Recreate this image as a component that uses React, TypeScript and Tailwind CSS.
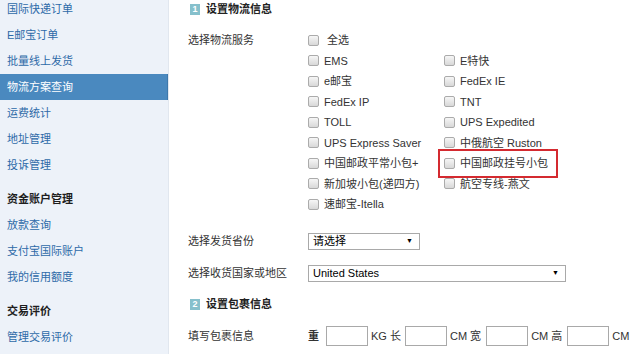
import React from "react";

const font = { fontFamily: '"Liberation Sans", "Noto Sans CJK SC", sans-serif' };

const menuTop = ["国际快递订单", "E邮宝订单", "批量线上发货", "物流方案查询", "运费统计", "地址管理", "投诉管理"];
const menuFund = ["放款查询", "支付宝国际账户", "我的信用额度"];

const leftCol = ["全选", "EMS", "e邮宝", "FedEx IP", "TOLL", "UPS Express Saver", "中国邮政平常小包+", "新加坡小包(递四方)", "速邮宝-Itella"];
const rightCol = ["", "E特快", "FedEx IE", "TNT", "UPS Expedited", "中俄航空 Ruston", "中国邮政挂号小包", "航空专线-燕文", ""];

const Checkbox = () => (
  <span className="w-[11px] h-[11px] shrink-0 rounded-[2px] border border-[#ababab] bg-linear-to-b from-[#f6f6f6] to-[#d8d8d8]" />
);

const SidebarItem = ({ label, active }: { label: string; active?: boolean }) => (
  <div
    className={
      "h-[26px] flex items-center pl-[7px] text-[11px] " +
      (active ? "bg-[#4a89bf] text-white border-r border-[#3d78ab]" : "text-[#2d6aa8]")
    }
  >
    {label}
  </div>
);

const SectionTitle = ({ num, title }: { num: string; title: string }) => (
  <div className="h-[19px] flex items-center pl-[2px] gap-[6px]">
    <span className="w-[10px] h-[11px] bg-[#86c0cc] text-white text-[9px] font-bold leading-[11px] flex items-center justify-center">
      {num}
    </span>
    <span className="text-[11px] font-bold text-[#222]">{title}</span>
  </div>
);

const Box = () => <span className="block w-[42px] h-[20px] border border-[#a9a9a9] bg-white" />;

export default function App() {
  return (
    <div className="w-[640px] h-[354px] overflow-hidden flex bg-white" style={font}>
      {/* 左侧菜单 */}
      <div className="w-[169px] shrink-0 bg-[#edf2f9] border-r border-[#e1e7ef]">
        <div className="mt-[-4px]">
          {menuTop.map((m, i) => (
            <SidebarItem key={m} label={m} active={i === 3} />
          ))}
          <div className="mt-2 h-[26px] flex items-center pl-[7px] text-[11px] font-bold text-[#1e1e1e]">资金账户管理</div>
          {menuFund.map((m) => (
            <SidebarItem key={m} label={m} />
          ))}
          <div className="mt-2 h-[26px] flex items-center pl-[7px] text-[11px] font-bold text-[#1e1e1e]">交易评价</div>
          <SidebarItem label="管理交易评价" />
        </div>
      </div>

      {/* 主内容 */}
      <div className="flex-1 pl-[19px] text-[11px] text-[#333]">
        <SectionTitle num="1" title="设置物流信息" />

        <div className="mt-[11px] flex">
          <div className="w-[120px] h-[20.5px] flex items-center">选择物流服务</div>
          <div className="grid grid-cols-[136px_auto]">
            {leftCol.map((l, i) => (
              <React.Fragment key={l}>
                <div className="h-[20.5px] flex items-center gap-[5px]">
                  <Checkbox />
                  <span className={i === 0 ? "ml-[3px]" : ""}>{l}</span>
                </div>
                <div className="h-[20.5px] flex items-center">
                  {rightCol[i] && (
                    <div className="relative flex items-center gap-[5px]">
                      <Checkbox />
                      <span>{rightCol[i]}</span>
                      {i === 6 && (
                        <span className="absolute left-[-6px] right-[-10px] top-[-6px] bottom-[-6px] border-2 border-[#d42a30]" />
                      )}
                    </div>
                  )}
                </div>
              </React.Fragment>
            ))}
          </div>
        </div>

        <div className="mt-[16.5px] h-[20px] flex items-center">
          <div className="w-[120px]">选择发货省份</div>
          <div className="w-[112px] h-[17px] border border-[#a9a9a9] bg-white flex items-center justify-between pl-[4px] pr-[6px] text-black">
            <span>请选择</span>
            <span className="text-[7px]">▼</span>
          </div>
        </div>

        <div className="mt-[12px] h-[20px] flex items-center">
          <div className="w-[120px]">选择收货国家或地区</div>
          <div className="w-[258px] h-[17px] border border-[#a9a9a9] bg-white flex items-center justify-between pl-[4px] pr-[6px] text-black">
            <span>United States</span>
            <span className="text-[7px]">▼</span>
          </div>
        </div>

        <div className="mt-[11.5px]">
          <SectionTitle num="2" title="设置包裹信息" />
        </div>

        <div className="mt-[12.5px] h-[20px] flex items-center">
          <div className="w-[120px]">填写包裹信息</div>
          <div className="flex items-center">
            <span className="font-bold">重</span>
            <span className="ml-[7px]"><Box /></span>
            <span className="ml-[3px]">KG 长</span>
            <span className="ml-[4px]"><Box /></span>
            <span className="ml-[3px]">CM 宽</span>
            <span className="ml-[5px]"><Box /></span>
            <span className="ml-[3px]">CM 高</span>
            <span className="ml-[5px]"><Box /></span>
            <span className="ml-[3px]">CM</span>
          </div>
        </div>
      </div>
    </div>
  );
}
